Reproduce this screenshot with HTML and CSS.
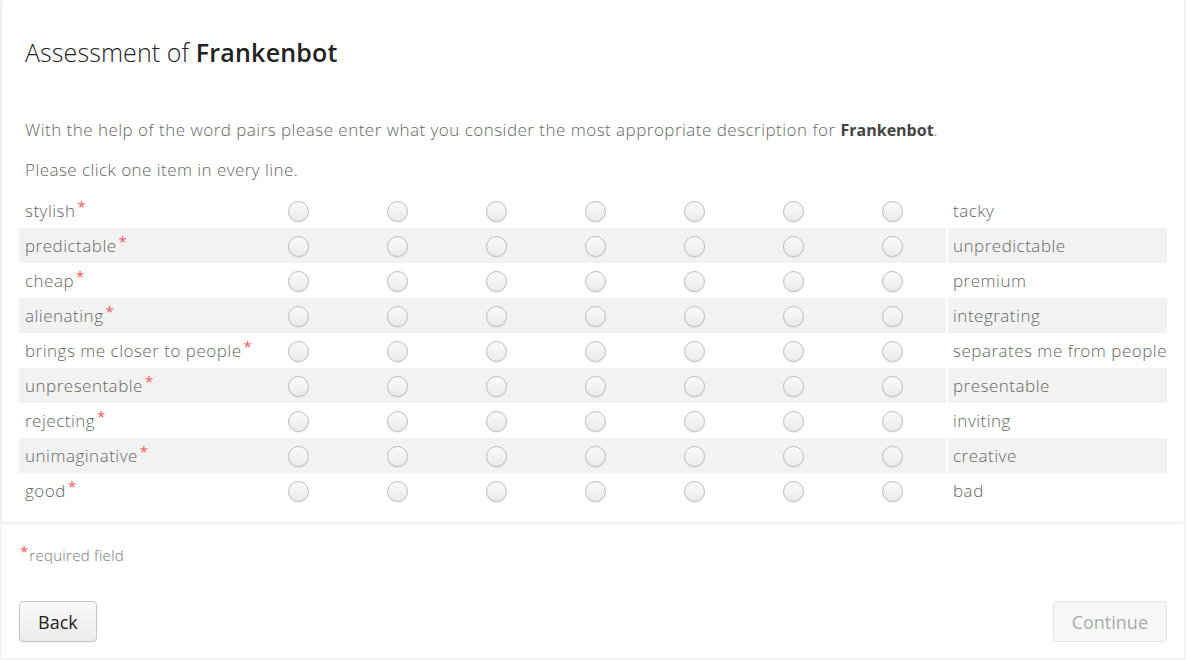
FILE: index.html
```html
<!DOCTYPE html>
<html>
<head>
<meta charset="utf-8">
<link rel="stylesheet" href="styles.css">
</head>
<body>
<div class="page">
  <div class="card">
    <h1 class="title"><span class="light">Assessment of </span><b>Frankenbot</b></h1>
    <p class="intro">With the help of the word pairs please enter what you consider the most appropriate description for <b>Frankenbot</b>.</p>
    <p class="hint">Please click one item in every line.</p>
    <table class="grid">
      <colgroup>
        <col class="c-label"><col class="c-radio"><col class="c-radio"><col class="c-radio"><col class="c-radio"><col class="c-radio"><col class="c-radio"><col class="c-radio"><col class="c-right">
      </colgroup>
      <tbody>
        <tr><td class="lbl">stylish<span class="req">*</span></td><td><span class="radio"></span></td><td><span class="radio"></span></td><td><span class="radio"></span></td><td><span class="radio"></span></td><td><span class="radio"></span></td><td><span class="radio"></span></td><td><span class="radio"></span></td><td class="rlbl">tacky</td></tr>
        <tr class="alt"><td class="lbl">predictable<span class="req">*</span></td><td><span class="radio"></span></td><td><span class="radio"></span></td><td><span class="radio"></span></td><td><span class="radio"></span></td><td><span class="radio"></span></td><td><span class="radio"></span></td><td><span class="radio"></span></td><td class="rlbl">unpredictable</td></tr>
        <tr><td class="lbl">cheap<span class="req">*</span></td><td><span class="radio"></span></td><td><span class="radio"></span></td><td><span class="radio"></span></td><td><span class="radio"></span></td><td><span class="radio"></span></td><td><span class="radio"></span></td><td><span class="radio"></span></td><td class="rlbl">premium</td></tr>
        <tr class="alt"><td class="lbl">alienating<span class="req">*</span></td><td><span class="radio"></span></td><td><span class="radio"></span></td><td><span class="radio"></span></td><td><span class="radio"></span></td><td><span class="radio"></span></td><td><span class="radio"></span></td><td><span class="radio"></span></td><td class="rlbl">integrating</td></tr>
        <tr><td class="lbl">brings me closer to people<span class="req">*</span></td><td><span class="radio"></span></td><td><span class="radio"></span></td><td><span class="radio"></span></td><td><span class="radio"></span></td><td><span class="radio"></span></td><td><span class="radio"></span></td><td><span class="radio"></span></td><td class="rlbl">separates me from people</td></tr>
        <tr class="alt"><td class="lbl">unpresentable<span class="req">*</span></td><td><span class="radio"></span></td><td><span class="radio"></span></td><td><span class="radio"></span></td><td><span class="radio"></span></td><td><span class="radio"></span></td><td><span class="radio"></span></td><td><span class="radio"></span></td><td class="rlbl">presentable</td></tr>
        <tr><td class="lbl">rejecting<span class="req">*</span></td><td><span class="radio"></span></td><td><span class="radio"></span></td><td><span class="radio"></span></td><td><span class="radio"></span></td><td><span class="radio"></span></td><td><span class="radio"></span></td><td><span class="radio"></span></td><td class="rlbl">inviting</td></tr>
        <tr class="alt"><td class="lbl">unimaginative<span class="req">*</span></td><td><span class="radio"></span></td><td><span class="radio"></span></td><td><span class="radio"></span></td><td><span class="radio"></span></td><td><span class="radio"></span></td><td><span class="radio"></span></td><td><span class="radio"></span></td><td class="rlbl">creative</td></tr>
        <tr><td class="lbl">good<span class="req">*</span></td><td><span class="radio"></span></td><td><span class="radio"></span></td><td><span class="radio"></span></td><td><span class="radio"></span></td><td><span class="radio"></span></td><td><span class="radio"></span></td><td><span class="radio"></span></td><td class="rlbl">bad</td></tr>
      </tbody>
    </table>
  </div>
  <div class="footer">
    <p class="required"><span class="req">*</span>required field</p>
    <div class="actions">
      <button class="btn">Back</button>
      <button class="btn disabled">Continue</button>
    </div>
  </div>
</div>
</body>
</html>
```
FILE: styles.css
```css
html, body {
  margin: 0;
  padding: 0;
}
body {
  background: #f3f3f3;
  font-family: "Open Sans", "Liberation Sans", sans-serif;
  color: #666;
}
.page {
  margin: 0 2px 2px 2px;
  background: #fff;
  height: 658px;
}
.card {
  background: #fff;
  border-radius: 0 0 4px 4px;
  box-shadow: 0 2px 3px rgba(0, 0, 0, 0.07);
  padding: 34px 17px 15px 17px;
  height: 473px;
}
.title {
  margin: 0 0 48px 6px;
  font-size: 25px;
  line-height: 36px;
  font-weight: 600;
  color: #222;
}
.title .light {
  font-weight: 300;
  letter-spacing: 0.1px;
}
.title b {
  font-weight: 600;
  letter-spacing: 0.2px;
}
.intro, .hint {
  margin: 0 0 0 6px;
  font-size: 17px;
  font-weight: 300;
  letter-spacing: 0.48px;
  line-height: 24px;
  color: #666;
}
.intro b {
  font-size: 16px;
  font-weight: 700;
  letter-spacing: 0;
  color: #444;
}
.hint {
  margin-top: 16px;
  margin-bottom: 11px;
  letter-spacing: 0.45px;
}
.grid {
  width: 1148px;
  table-layout: fixed;
  border-collapse: collapse;
  font-size: 17px;
  font-weight: 300;
  letter-spacing: 0.5px;
  color: #666;
}
.c-label { width: 230px; }
.c-radio { width: 99px; }
.c-right { width: 225px; }
.grid td {
  height: 35px;
  padding: 0;
  text-align: center;
  vertical-align: middle;
}
.grid tr.alt td {
  background: #f2f2f2;
}
.grid td.lbl {
  text-align: left;
  padding-left: 6px;
  white-space: nowrap;
  overflow: visible;
}
.grid td.rlbl {
  text-align: left;
  padding-left: 11px;
  white-space: nowrap;
}
.grid tr.alt td.rlbl {
  background: linear-gradient(to right, #f2f2f2 4px, #fff 4px, #fff 6px, #f2f2f2 6px);
}
.req {
  color: #f05a5a;
  font-size: 15px;
  font-weight: 400;
  letter-spacing: 0;
  vertical-align: 5px;
  margin-left: 2px;
  line-height: 0;
}
.radio {
  display: inline-block;
  width: 21px;
  height: 21px;
  box-sizing: border-box;
  border: 1px solid #bcbcbc;
  border-radius: 50%;
  background: linear-gradient(to bottom, #fafafa, #ebebeb);
  box-shadow: 0 1px 1px rgba(0, 0, 0, 0.08);
  vertical-align: middle;
}
.footer {
  padding: 0 17px;
}
.required {
  margin: 0;
  padding-top: 23px;
  font-size: 15px;
  font-weight: 300;
  letter-spacing: 0.3px;
  line-height: 20px;
  color: #777;
}
.required .req {
  font-size: 15px;
  margin-left: 1px;
  margin-right: 1px;
  vertical-align: 4px;
}
.actions {
  margin-top: 36px;
  display: flex;
  justify-content: space-between;
}
.btn {
  height: 41px;
  padding: 0 18px;
  font-family: "Open Sans", "Liberation Sans", sans-serif;
  font-size: 18px;
  color: #222;
  border: 1px solid #c6c6c6;
  border-radius: 4px;
  background: linear-gradient(to bottom, #fafafa, #ececec);
  box-shadow: 0 1px 1px rgba(0, 0, 0, 0.06);
}
.btn.disabled {
  color: #aaa;
  border-color: #e3e3e3;
  background: #f8f8f8;
  box-shadow: none;
}
```
